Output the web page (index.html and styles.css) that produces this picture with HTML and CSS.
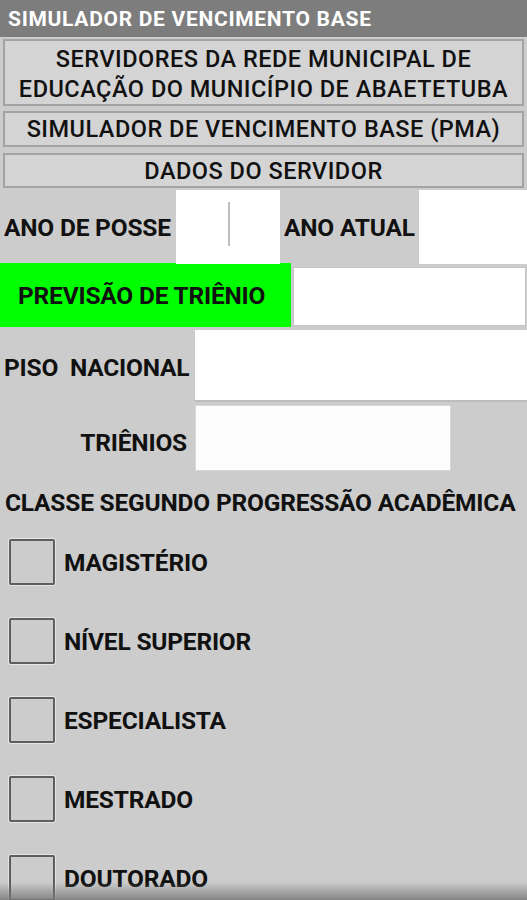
FILE: index.html
```html
<!DOCTYPE html>
<html lang="pt">
<head>
<meta charset="utf-8">
<title>Simulador de Vencimento Base</title>
<link rel="stylesheet" href="styles.css">
</head>
<body>
<header class="titlebar">SIMULADOR DE VENCIMENTO BASE</header>
<main class="content">
  <div class="btn btn-tall">SERVIDORES DA REDE MUNICIPAL DE<br>EDUCAÇÃO DO MUNICÍPIO DE ABAETETUBA</div>
  <div class="btn btn-pma">SIMULADOR DE VENCIMENTO BASE (PMA)</div>
  <div class="btn btn-dados">DADOS DO SERVIDOR</div>

  <div class="row-anos">
    <span class="lbl">ANO DE POSSE</span>
    <div class="field field-posse"><span class="cursor"></span></div>
    <span class="lbl">ANO ATUAL</span>
    <div class="field field-atual"></div>
  </div>

  <div class="row-previsao">
    <span class="green">PREVISÃO DE TRIÊNIO</span>
    <div class="field field-prev"></div>
  </div>

  <div class="row-piso">
    <span class="lbl">PISO&nbsp; NACIONAL</span>
    <div class="field field-piso"></div>
  </div>

  <div class="row-trienios">
    <span class="lbl lbl-right">TRIÊNIOS</span>
    <div class="field field-tri"></div>
  </div>

  <div class="heading">CLASSE SEGUNDO PROGRESSÃO ACADÊMICA</div>

  <ul class="checks">
    <li><span class="box"></span>MAGISTÉRIO</li>
    <li><span class="box"></span>NÍVEL SUPERIOR</li>
    <li><span class="box"></span>ESPECIALISTA</li>
    <li><span class="box"></span>MESTRADO</li>
    <li><span class="box"></span>DOUTORADO</li>
  </ul>
</main>
<div class="navshade"></div>
</body>
</html>
```
FILE: styles.css
```css
html, body {
  margin: 0;
  padding: 0;
}
body {
  width: 527px;
  height: 900px;
  overflow: hidden;
  background: #cccccc;
  font-family: Roboto, "Liberation Sans", sans-serif;
  color: #111;
  position: relative;
}
.titlebar {
  height: 37px;
  background: #7d7d7d;
  color: #fff;
  font-size: 21px;
  font-weight: 700;
  letter-spacing: 0.7px;
  line-height: 38px;
  padding-left: 8px;
  box-sizing: border-box;
  white-space: nowrap;
}
.content {
  display: flex;
  flex-direction: column;
}
.btn {
  margin: 0 3px;
  background: #d4d4d4;
  border: 2px solid #a3a3a3;
  box-sizing: border-box;
  text-align: center;
  font-size: 23.5px;
  font-weight: 500;
  letter-spacing: 0.5px;
  color: #111;
  white-space: nowrap;
}
.btn-tall {
  margin-top: 2px;
  height: 67px;
  line-height: 30px;
  padding-top: 3px;
}
.btn-pma {
  margin-top: 5px;
  height: 36px;
  line-height: 33px;
}
.btn-dados {
  margin-top: 6px;
  height: 35px;
  line-height: 33px;
}
.lbl {
  font-size: 24.5px;
  font-weight: 700;
  letter-spacing: -0.2px;
  white-space: nowrap;
}
.field {
  background: #fff;
}
.row-anos {
  margin-top: 2px;
  height: 73px;
  display: grid;
  grid-template-columns: 176px 104px 139px 1fr;
  align-items: center;
}
.row-anos .lbl {
  padding-left: 4px;
}
.row-anos .field {
  height: 100%;
  position: relative;
}
.field-posse .cursor {
  position: absolute;
  left: 52px;
  top: 12px;
  width: 2px;
  height: 44px;
  background: #bdbdbd;
}
.row-anos .field-atual {
  height: 74px;
  align-self: start;
}
.row-previsao {
  height: 64px;
  display: flex;
  align-items: center;
}
.green {
  width: 291px;
  height: 100%;
  background: #00ff00;
  box-sizing: border-box;
  padding-left: 18px;
  display: flex;
  align-items: center;
  font-size: 24.5px;
  font-weight: 700;
  letter-spacing: -0.2px;
  white-space: nowrap;
}
.field-prev {
  flex: 1;
  margin: 2px 1px 0 2px;
  height: 59px;
  border: 1px solid #c4c4c4;
  box-sizing: border-box;
}
.row-piso {
  margin-top: 3px;
  height: 72px;
  display: grid;
  grid-template-columns: 195px 1fr;
  align-items: center;
}
.row-piso .lbl {
  padding-left: 4px;
  padding-top: 2px;
}
.field-piso {
  height: 100%;
  border-bottom: 2px solid #bdbdbd;
  box-sizing: border-box;
}
.row-trienios {
  margin-top: 3px;
  height: 66px;
  display: grid;
  grid-template-columns: 195px 256px;
  align-items: center;
}
.lbl-right {
  text-align: right;
  padding-right: 8px;
  padding-top: 8px;
}
.field-tri {
  height: 100%;
  background: #fdfdfd;
  border: 1px solid #d8d8d8;
  box-sizing: border-box;
}
.heading {
  margin-top: 17px;
  padding-left: 5px;
  font-size: 24.5px;
  font-weight: 700;
  letter-spacing: -0.2px;
  line-height: 30px;
  white-space: nowrap;
}
.checks {
  list-style: none;
  margin: 21px 0 0;
  padding: 0;
  display: flex;
  flex-direction: column;
  gap: 33px;
}
.checks li {
  display: flex;
  align-items: center;
  height: 46px;
  padding-left: 9px;
  font-size: 24.5px;
  font-weight: 700;
  letter-spacing: -0.2px;
}
.box {
  width: 46px;
  height: 46px;
  box-sizing: border-box;
  border: 2px solid #5e5e5e;
  border-radius: 2px;
  box-shadow: 0 0 0 1px #e6e6e6;
  margin-right: 9px;
}
.navshade {
  position: absolute;
  left: 0;
  right: 0;
  bottom: 0;
  height: 18px;
  background: linear-gradient(to bottom, rgba(120,120,120,0), rgba(120,120,120,0.85));
}
```
